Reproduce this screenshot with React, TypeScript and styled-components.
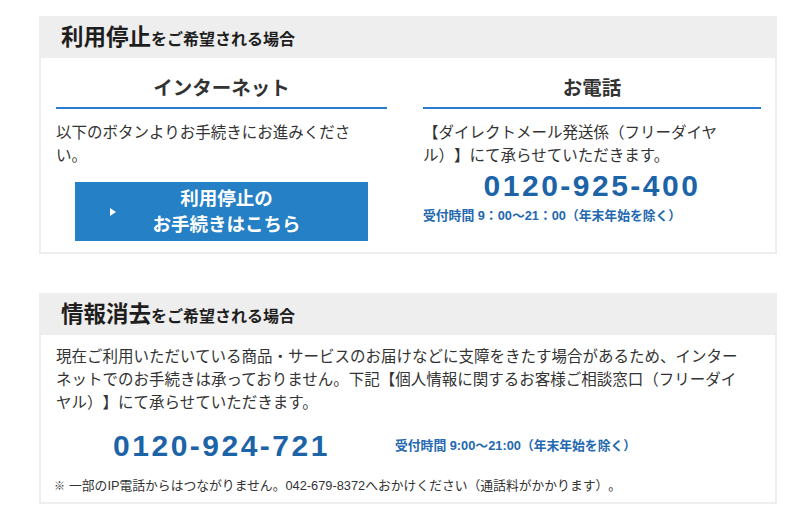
import React from "react";
import styled, { createGlobalStyle } from "styled-components";

const Global = createGlobalStyle`
  html, body { margin: 0; padding: 0; background: #ffffff; }
  body {
    font-family: "Liberation Sans", "Noto Sans CJK JP", sans-serif;
    color: #333333;
    text-spacing-trim: space-all;
  }
`;

const Page = styled.div`
  width: 738px;
  padding: 16px 0 20px 39px;
  display: flex;
  flex-direction: column;
  gap: 39px;
`;

const Section = styled.section`
  display: flex;
  flex-direction: column;
`;

const Header = styled.h2`
  margin: 0;
  height: 42px;
  line-height: 44px;
  padding-left: 22px;
  background: #eeeeee;
  color: #1e1e1e;
  font-size: 22.5px;
  font-weight: 700;
  white-space: nowrap;
`;

const HeaderSub = styled.span`
  font-size: 16px;
`;

const Body = styled.div<{ $pt: number; $pb: number }>`
  border: 2px solid #eeeeee;
  border-top: none;
  padding: ${(p) => p.$pt}px 14px ${(p) => p.$pb}px 15px;
`;

const Columns = styled.div`
  display: grid;
  grid-template-columns: 331px 338px;
  column-gap: 36px;
  align-items: start;
`;

const Column = styled.div`
  display: flex;
  flex-direction: column;
`;

const ColHeading = styled.h3`
  margin: 0;
  text-align: center;
  font-size: 19.5px;
  font-weight: 700;
  line-height: 30px;
  color: #333333;
  padding-bottom: 4px;
  border-bottom: 2px solid #2b7bd2;
`;

const Text = styled.p<{ $mt?: number; $max?: number }>`
  margin: ${(p) => p.$mt ?? 0}px 0 0;
  font-size: 15.5px;
  line-height: 23px;
  color: #333333;
  max-width: ${(p) => (p.$max ? `${p.$max}px` : "none")};
`;

const Button = styled.a`
  position: relative;
  align-self: center;
  margin-top: 15px;
  width: 293px;
  height: 59px;
  box-sizing: border-box;
  padding-left: 10px;
  display: flex;
  align-items: center;
  justify-content: center;
  text-align: center;
  background: #2680c5;
  color: #ffffff;
  font-size: 18.5px;
  font-weight: 700;
  line-height: 26px;
  text-decoration: none;
  cursor: pointer;
`;

const Arrow = styled.span`
  position: absolute;
  left: 35px;
  top: 50%;
  margin-top: -4px;
  width: 0;
  height: 0;
  border-top: 4px solid transparent;
  border-bottom: 4px solid transparent;
  border-left: 6px solid #ffffff;
`;

const Phone = styled.div<{ $mt?: number }>`
  margin-top: ${(p) => p.$mt ?? 0}px;
  text-align: center;
  font-family: "Liberation Sans", Arial, sans-serif;
  font-size: 30px;
  font-weight: 700;
  letter-spacing: 2.5px;
  line-height: 36px;
  color: #1c63a8;
`;

const Hours = styled.div<{ $mt?: number }>`
  margin-top: ${(p) => p.$mt ?? 0}px;
  font-size: 12.8px;
  font-weight: 700;
  line-height: 18px;
  color: #2368b0;
  white-space: nowrap;
`;

const PhoneRow = styled.div`
  margin-top: 14px;
  display: grid;
  grid-template-columns: 331px 1fr;
  column-gap: 8px;
  align-items: center;
`;

const Note = styled.p`
  margin: 12px 0 0 -2px;
  font-size: 12.8px;
  line-height: 20px;
  color: #333333;
  white-space: nowrap;
`;

const Mark = styled.span`
  font-size: 11px;
  font-weight: 700;
  color: #333333;
  margin-right: 4px;
`;

export default function App() {
  return (
    <>
      <Global />
      <Page>
        <Section>
          <Header>
            利用停止<HeaderSub>をご希望される場合</HeaderSub>
          </Header>
          <Body $pt={15} $pb={11}>
            <Columns>
              <Column>
                <ColHeading>インターネット</ColHeading>
                <Text $mt={12} $max={305}>
                  以下のボタンよりお手続きにお進みください。
                </Text>
                <Button>
                  <Arrow />
                  <span>
                    利用停止の
                    <br />
                    お手続きはこちら
                  </span>
                </Button>
              </Column>
              <Column>
                <ColHeading>お電話</ColHeading>
                <Text $mt={12} $max={305}>
                  【ダイレクトメール発送係（フリーダイヤル）】にて承らせていただきます。
                </Text>
                <Phone $mt={1}>0120-925-400</Phone>
                <Hours $mt={3}>受付時間 9：00〜21：00（年末年始を除く）</Hours>
              </Column>
            </Columns>
          </Body>
        </Section>

        <Section>
          <Header>
            情報消去<HeaderSub>をご希望される場合</HeaderSub>
          </Header>
          <Body $pt={10} $pb={6}>
            <Text $max={690}>
              現在ご利用いただいている商品・サービスのお届けなどに支障をきたす場合があるため、インターネットでのお手続きは承っておりません。下記【個人情報に関するお客様ご相談窓口（フリーダイヤル）】にて承らせていただきます。
            </Text>
            <PhoneRow>
              <Phone>0120-924-721</Phone>
              <Hours>受付時間 9:00〜21:00（年末年始を除く）</Hours>
            </PhoneRow>
            <Note>
              <Mark>※</Mark>一部のIP電話からはつながりません。042-679-8372へおかけください（通話料がかかります）。
            </Note>
          </Body>
        </Section>
      </Page>
    </>
  );
}
